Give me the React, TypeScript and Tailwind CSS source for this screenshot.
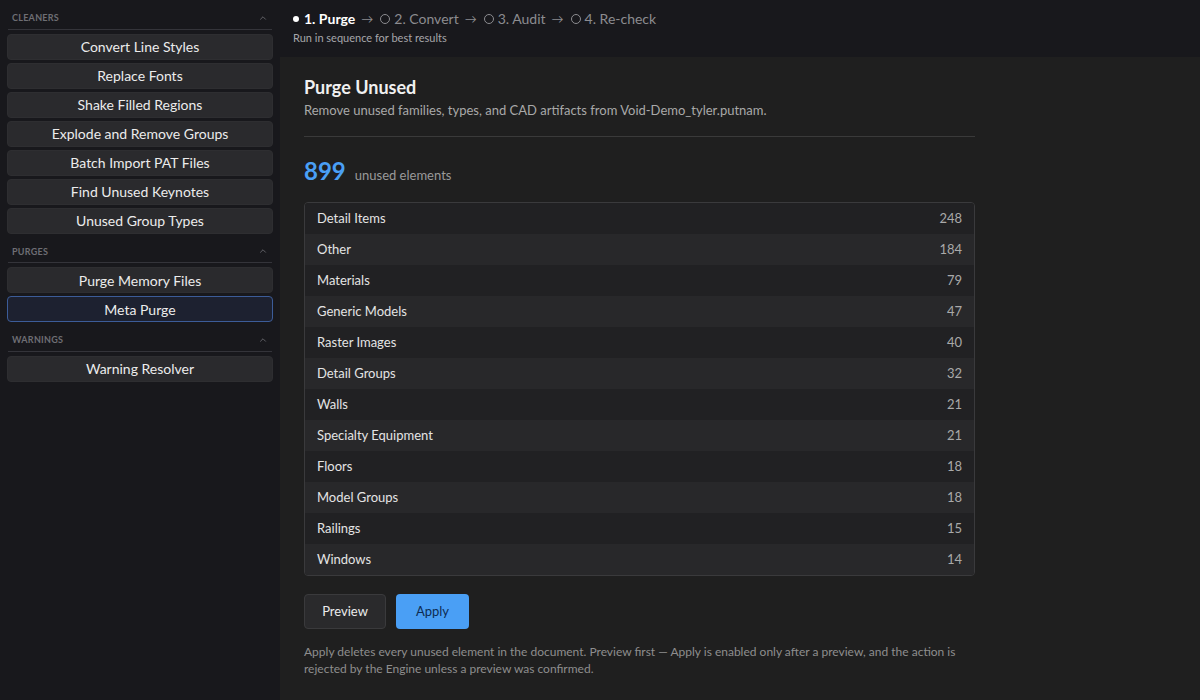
import { ChevronUp } from 'lucide-react';

const sections = [
  {
    title: 'Cleaners',
    items: [
      'Convert Line Styles',
      'Replace Fonts',
      'Shake Filled Regions',
      'Explode and Remove Groups',
      'Batch Import PAT Files',
      'Find Unused Keynotes',
      'Unused Group Types',
    ],
  },
  { title: 'Purges', items: ['Purge Memory Files', 'Meta Purge'] },
  { title: 'Warnings', items: ['Warning Resolver'] },
];

const rows: [string, number][] = [
  ['Detail Items', 248],
  ['Other', 184],
  ['Materials', 79],
  ['Generic Models', 47],
  ['Raster Images', 40],
  ['Detail Groups', 32],
  ['Walls', 21],
  ['Specialty Equipment', 21],
  ['Floors', 18],
  ['Model Groups', 18],
  ['Railings', 15],
  ['Windows', 14],
];

const steps = ['2. Convert', '3. Audit', '4. Re-check'];

function Sidebar() {
  return (
    <aside className="flex w-[280px] shrink-0 flex-col bg-[#18181c] px-[7px] pt-[11px]">
      {sections.map((section) => (
        <div key={section.title} className="mb-[11px] flex flex-col">
          <div className="mx-[5px] flex items-center justify-between">
            <span className="text-[9px] font-bold tracking-[0.03em] text-[#6e6e74] uppercase">
              {section.title}
            </span>
            <ChevronUp className="h-[10px] w-[10px] text-[#6e6e74]" strokeWidth={2} />
          </div>
          <div className="mx-[1px] mt-[4px] mb-[4px] h-px bg-[#34343a]" />
          <div className="flex flex-col gap-[3px]">
            {section.items.map((item) => {
              const active = item === 'Meta Purge';
              return (
                <button
                  key={item}
                  className={
                    active
                      ? 'h-[26px] rounded-[4px] border border-[#3c5c98] bg-[#1d2130] text-[14px] text-[#ececec]'
                      : 'h-[26px] rounded-[4px] border border-[#2e2e31] bg-[#2a2a2d] text-[14px] text-[#ececec]'
                  }
                >
                  {item}
                </button>
              );
            })}
          </div>
        </div>
      ))}
    </aside>
  );
}

function Steps() {
  return (
    <header className="bg-[#18181c] px-[13px] pt-[8px] pb-[10px]">
      <div className="flex items-center gap-[6px] text-[14px]">
        <span className="flex items-center gap-[5px] font-bold text-white">
          <span className="h-[6px] w-[6px] rounded-full bg-white" />
          1. Purge
        </span>
        {steps.map((step) => (
          <span key={step} className="flex items-center gap-[7px] text-[#8c8c90]">
            <span className="text-[12px]">→</span>
            <span className="flex items-center gap-[4px]">
              <span className="h-[10px] w-[10px] rounded-full border border-[#8c8c90]" />
              {step}
            </span>
          </span>
        ))}
      </div>
      <p className="mt-[1px] text-[11px] text-[#a6a6aa]">Run in sequence for best results</p>
    </header>
  );
}

function PurgePanel() {
  return (
    <section className="flex-1 bg-[#1f1f1f] px-[24px] pt-[18px]">
      <div className="w-[671px]">
        <h1 className="text-[18px] leading-[24px] font-bold text-[#f0f0f0]">Purge Unused</h1>
        <p className="mt-[2px] text-[13px] text-[#a9a9a9]">
          Remove unused families, types, and CAD artifacts from Void-Demo_tyler.putnam.
        </p>
        <div className="mt-[16px] h-px bg-[#3a3a3a]" />
        <div className="mt-[18px] flex items-baseline gap-[9px]">
          <span className="text-[24px] leading-[32px] font-bold text-[#4a9ff5]">899</span>
          <span className="text-[13px] text-[#9a9a9a]">unused elements</span>
        </div>
        <div className="mt-[15px] overflow-hidden rounded-[4px] border border-[#3a3a3c]">
          {rows.map(([name, count], i) => (
            <div
              key={name}
              className={`flex h-[31px] items-center justify-between px-[12px] text-[13px] ${
                i % 2 === 0 ? 'bg-[#212123]' : 'bg-[#28282a]'
              }`}
            >
              <span className="text-[#e4e4e4]">{name}</span>
              <span className="text-[#a9a9a9]">{count}</span>
            </div>
          ))}
        </div>
        <div className="mt-[18px] flex gap-[10px]">
          <button className="h-[35px] w-[82px] rounded-[4px] border border-[#3a3a3c] bg-[#2a2a2c] text-[13px] text-[#ececec]">
            Preview
          </button>
          <button className="h-[35px] w-[73px] rounded-[4px] bg-[#4a9ff5] text-[13px] text-[#0e2c52]">
            Apply
          </button>
        </div>
        <p className="mt-[14px] text-[12px] leading-[17px] text-[#8e8e8e]">
          Apply deletes every unused element in the document. Preview first — Apply is enabled only after a
          preview, and the action is rejected by the Engine unless a preview was confirmed.
        </p>
      </div>
    </section>
  );
}

export default function App() {
  return (
    <div className="flex h-[700px] w-[1200px] overflow-hidden bg-[#1f1f1f] font-['Lato',sans-serif]">
      <Sidebar />
      <main className="flex flex-1 flex-col">
        <Steps />
        <PurgePanel />
      </main>
    </div>
  );
}
